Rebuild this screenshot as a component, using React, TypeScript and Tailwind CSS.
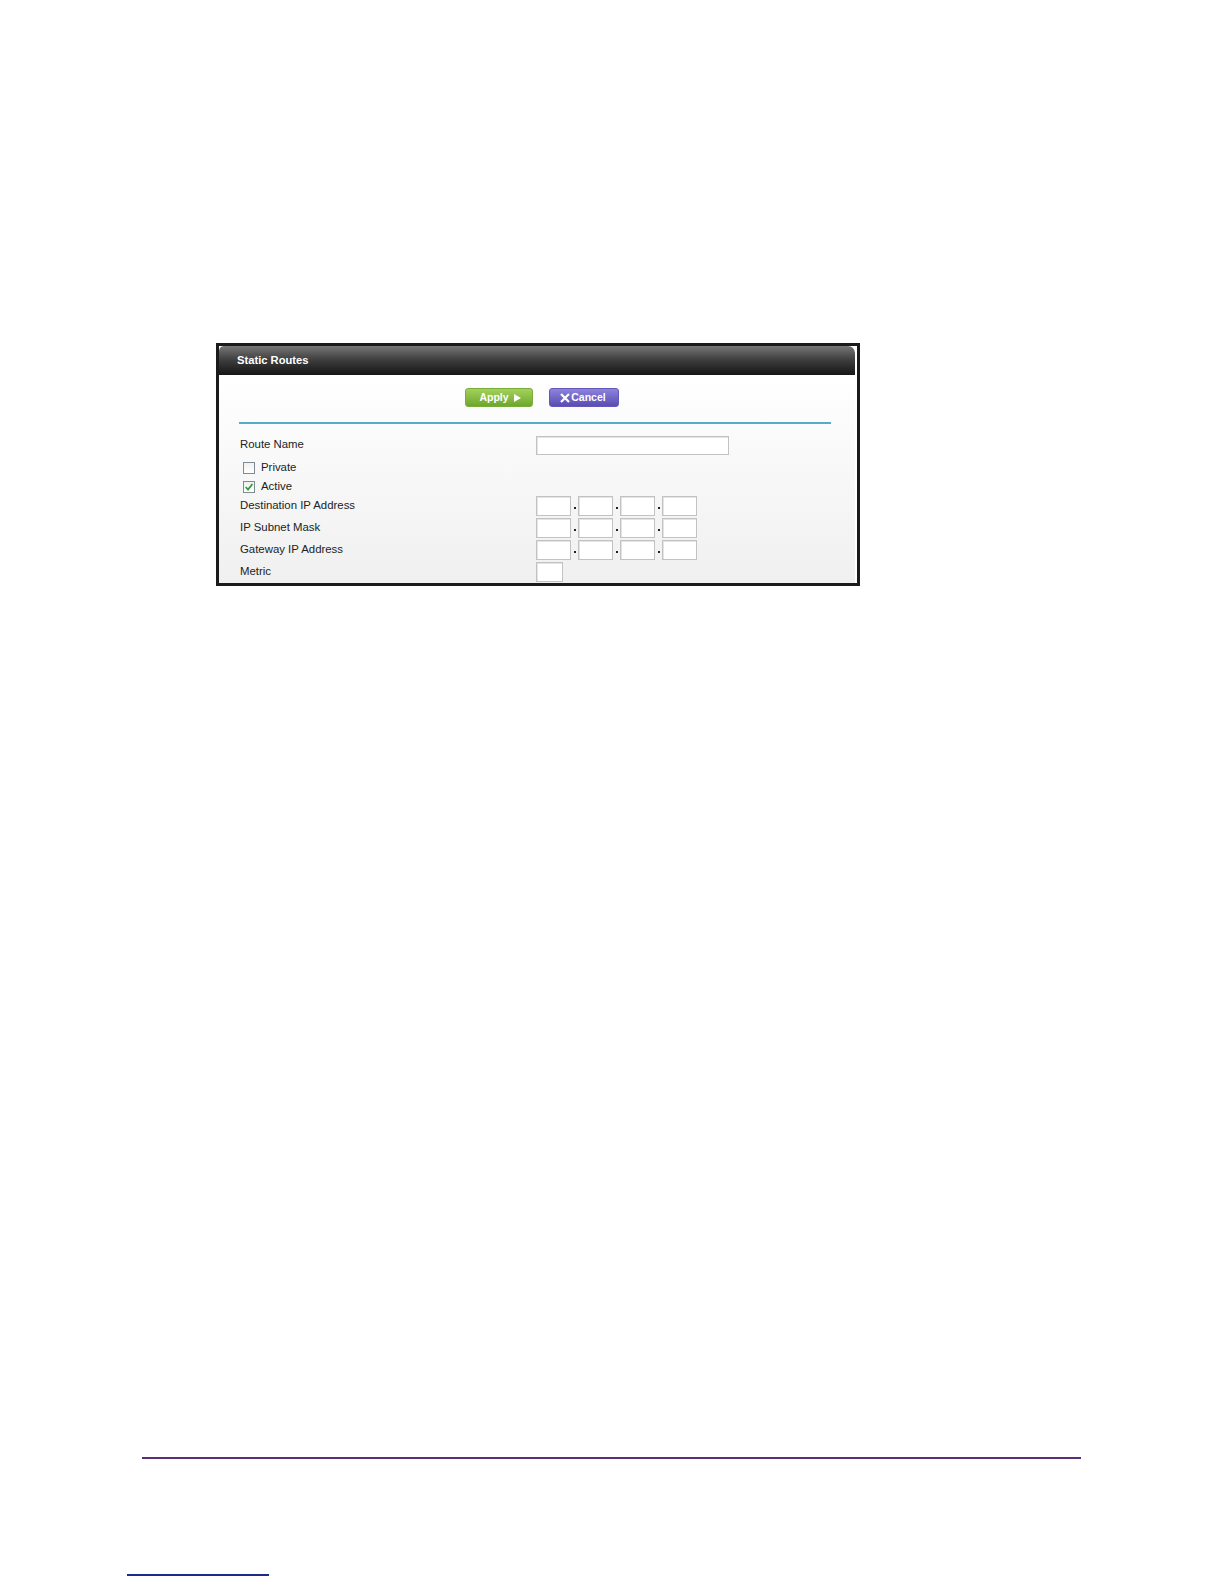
import React from 'react';

const font = { fontFamily: '"Liberation Sans", Arial, sans-serif' };

function IpBox({ w = 'w-[35px]' }: { w?: string }) {
  return (
    <div className={`${w} h-[20px] bg-white border border-[#c2c2c2] shadow-[inset_1px_1px_0_#e4e4e4]`} />
  );
}

function Dot() {
  return (
    <div className="w-[7px] flex justify-center pt-[3px]">
      <div className="w-[2px] h-[2px] bg-[#222]" />
    </div>
  );
}

function IpRow() {
  return (
    <div className="flex items-center">
      <IpBox />
      <Dot />
      <IpBox />
      <Dot />
      <IpBox />
      <Dot />
      <IpBox />
    </div>
  );
}

function Checkbox({ checked, label }: { checked?: boolean; label: string }) {
  return (
    <div className="flex items-center h-[19px] pl-[3px]">
      <div className="w-[12px] h-[12px] border border-[#7f8a93] bg-gradient-to-b from-[#f0f0f0] to-[#ffffff] flex items-center justify-center">
        {checked && (
          <svg width="10" height="10" viewBox="0 0 9 9">
            <path d="M1.5 4.5 L3.6 6.8 L7.6 1.8" fill="none" stroke="#2f9e36" strokeWidth="1.6" />
          </svg>
        )}
      </div>
      <span className="ml-[6px] text-[11.4px] text-[#222]">{label}</span>
    </div>
  );
}

export default function App() {
  return (
    <div className="w-[1224px] h-[1584px] bg-white flex flex-col" style={font}>
      <div className="mt-[343px] ml-[216px] w-[644px] h-[243px] border-[3px] border-[#1b1b1b] bg-white flex flex-col">
        <div className="mr-[2px] h-[31px] rounded-tl-[5px] rounded-tr-[7px] bg-gradient-to-b from-[#777777] via-[#3c3c3c] to-[#161616] flex items-center pl-[18px]">
          <span className="text-[11.2px] font-bold text-white">Static Routes</span>
        </div>
        <div className="mr-[2px] flex-1 bg-gradient-to-b from-white to-[#f0f0f0] flex flex-col">
          <div className="flex mt-[13px] ml-[246px] gap-[16px]">
            <div className="w-[68px] h-[19px] rounded-[3px] bg-gradient-to-b from-[#a4d15a] to-[#6ea72c] border border-[#79ad3a] flex items-center justify-center gap-[5px] pl-[2px]">
              <span className="text-[10.5px] font-bold text-white">Apply</span>
              <svg width="7" height="8" viewBox="0 0 7 8">
                <path d="M0 0 L7 4 L0 8 Z" fill="#fff" />
              </svg>
            </div>
            <div className="w-[70px] h-[19px] rounded-[3px] bg-gradient-to-b from-[#8d83db] to-[#5a4cb3] border border-[#6457bb] flex items-center justify-center pr-[2px]">
              <svg width="10" height="10" viewBox="0 0 10 10" className="mr-[1px]">
                <path d="M1 1 L9 9 M9 1 L1 9" stroke="#fff" strokeWidth="2.2" />
              </svg>
              <span className="text-[10.5px] font-bold text-white">Cancel</span>
            </div>
          </div>
          <div className="mt-[15px] ml-[20px] w-[592px] h-[2px] bg-[#56abc8]" />
          <div className="mt-[11px] ml-[21px] flex flex-col text-[11.4px] text-[#222]">
            <div className="flex items-center h-[20px]">
              <div className="w-[296px]">Route Name</div>
              <div className="w-[193px] h-[19px] bg-white border border-[#c2c2c2] shadow-[inset_1px_1px_0_#e4e4e4]" />
            </div>
            <div className="mt-[3px]">
              <Checkbox label="Private" />
              <Checkbox checked label="Active" />
            </div>
            <div className="flex items-center h-[22px] -mt-[1px]">
              <div className="w-[296px]">Destination IP Address</div>
              <IpRow />
            </div>
            <div className="flex items-center h-[22px]">
              <div className="w-[296px]">IP Subnet Mask</div>
              <IpRow />
            </div>
            <div className="flex items-center h-[22px]">
              <div className="w-[296px]">Gateway IP Address</div>
              <IpRow />
            </div>
            <div className="flex items-center h-[22px]">
              <div className="w-[296px]">Metric</div>
              <IpBox w="w-[27px]" />
            </div>
          </div>
        </div>
      </div>
      <div className="mt-[871px] ml-[142px] w-[939px] h-[2px] bg-[#5b2d7a]" />
      <div className="mt-[115px] ml-[127px] w-[142px] h-[2px] bg-[#1c2a8c]" />
    </div>
  );
}
